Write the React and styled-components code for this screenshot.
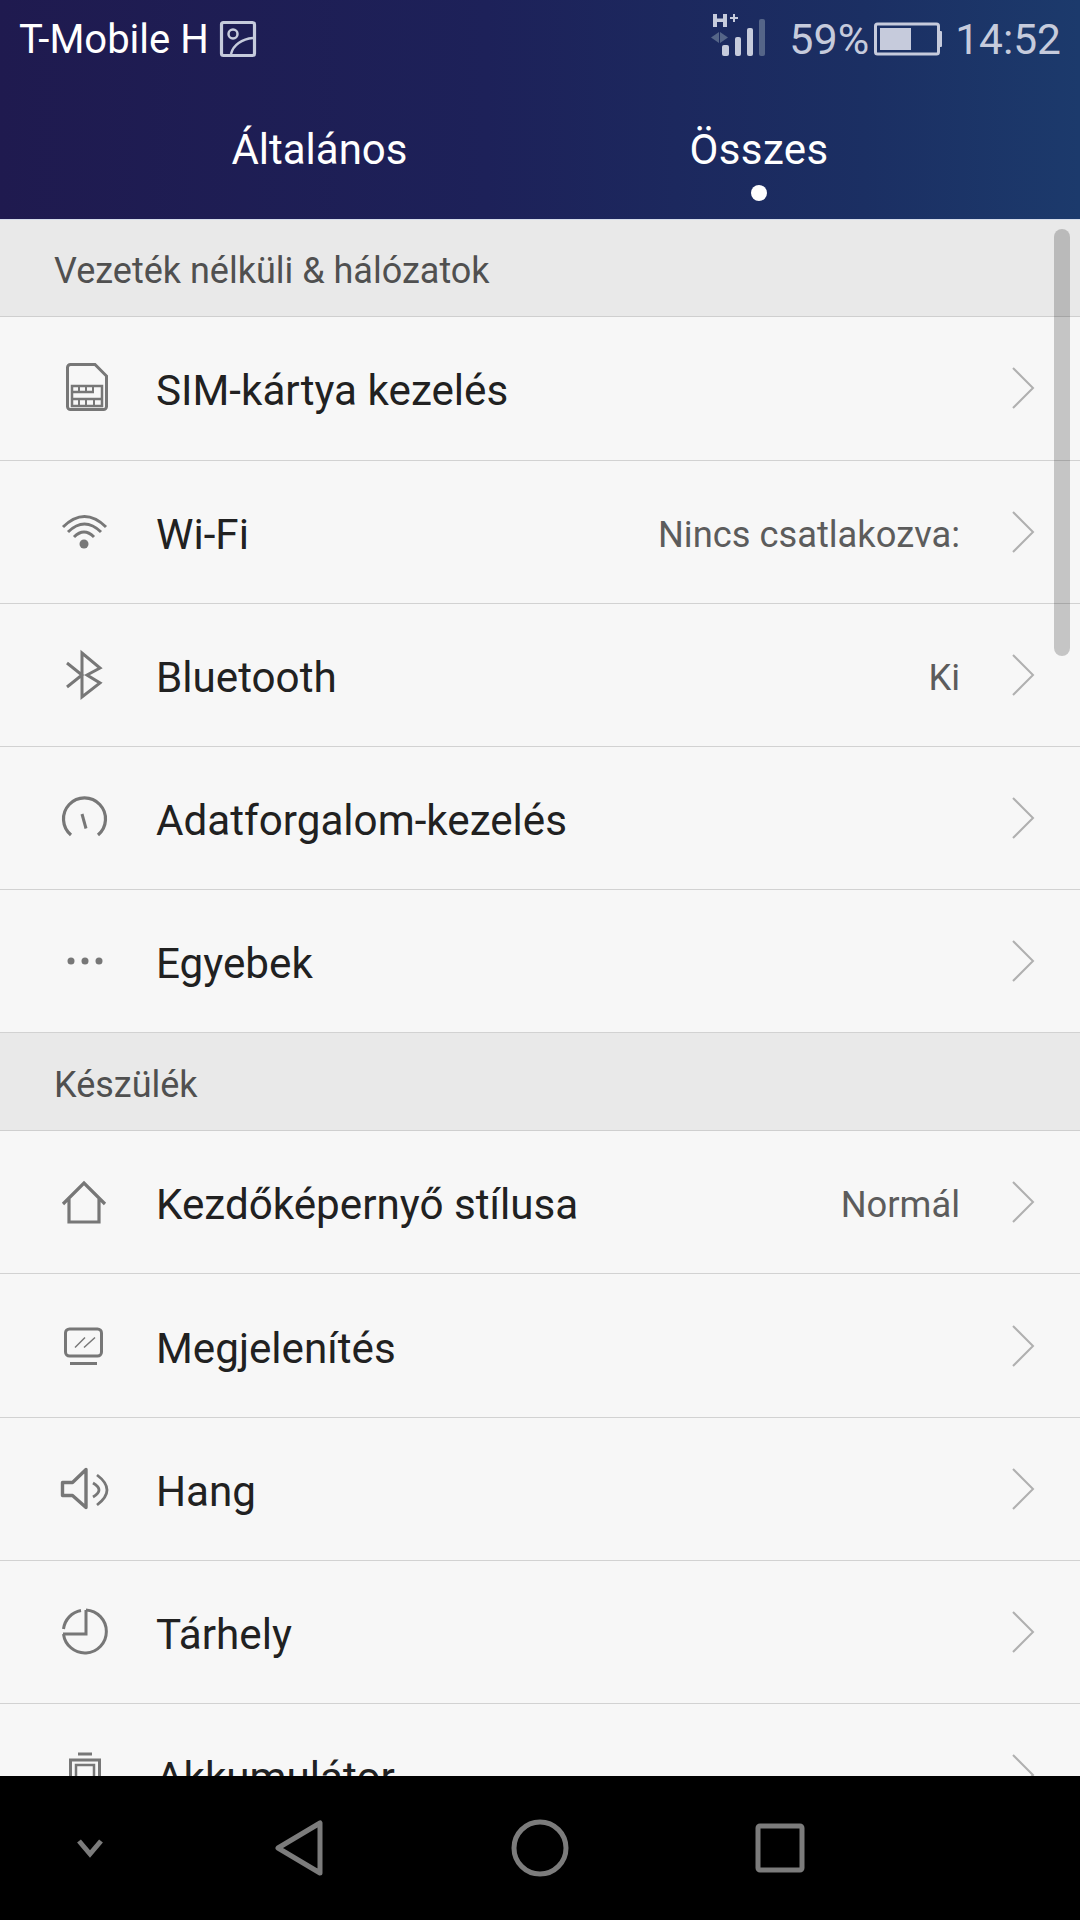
import React from 'react';
import styled, { createGlobalStyle } from 'styled-components';

const GlobalStyle = createGlobalStyle`
  html,
  body {
    margin: 0;
    padding: 0;
    background: #000;
  }
`;

const Screen = styled.div`
  position: relative;
  display: flex;
  flex-direction: column;
  width: 1080px;
  height: 1920px;
  overflow: hidden;
  font-family: Roboto, 'Noto Sans', sans-serif;
  background: #f7f7f7;
`;

const Header = styled.header`
  flex: none;
  height: 220px;
  box-sizing: border-box;
  background: linear-gradient(90deg, #1f1a4f 0%, #1d2159 45%, #1b2f63 80%, #1c3a6c 100%);
  border-bottom: 1px solid #d5dcea;
`;

const StatusBar = styled.div`
  display: flex;
  align-items: center;
  justify-content: space-between;
  height: 78px;
  padding: 0 19px;
`;

const StatusGroup = styled.div`
  display: flex;
  align-items: center;
  gap: ${props => props.gap || '0'};
`;

const Carrier = styled.span`
  font-size: 40px;
  color: #fff;
`;

const StatusText = styled.span`
  margin-left: ${props => props.$left || '0'};
  font-size: ${props => props.$size || '43px'};
  color: #c6cbdc;
`;

const Tabs = styled.nav`
  display: flex;
  justify-content: center;
  gap: 282px;
  padding-right: 20px;
`;

const Tab = styled.div`
  position: relative;
  margin-top: 47px;
  font-size: 42px;
  line-height: 50px;
  letter-spacing: ${props => props.$spacing || '0'};
  color: #fff;
`;

const TabDot = styled.span`
  position: absolute;
  left: 50%;
  bottom: -26px;
  width: 16px;
  height: 16px;
  margin-left: -8px;
  border-radius: 50%;
  background: #fff;
`;

const List = styled.main`
  position: relative;
  flex: 1;
  overflow: hidden;
`;

const SectionTitle = styled.div`
  display: flex;
  align-items: center;
  height: ${props => props.$height};
  box-sizing: border-box;
  padding: 6px 0 0 54px;
  font-size: 36px;
  color: #505050;
  background: #e9e9e9;
  border-bottom: 1px solid #cfcfcf;
`;

const Row = styled.div`
  display: flex;
  align-items: center;
  height: 143.2px;
  box-sizing: border-box;
  padding: 0 45px 0 61px;
  background: #f7f7f7;
  border-bottom: 1px solid #d2d2d2;
`;

const IconSlot = styled.span`
  display: flex;
  flex: none;
  width: 48px;
  height: 48px;
  margin-right: 47px;
  color: #777;
`;

const RowLabel = styled.span`
  flex: 1;
  padding-top: 5px;
  font-size: 42.2px;
  color: #212121;
`;

const RowValue = styled.span`
  margin-right: 51px;
  padding-top: 5px;
  font-size: 36.3px;
  color: #5c5c5c;
`;

const Scrollbar = styled.div`
  position: absolute;
  top: 9px;
  right: 10px;
  width: 16px;
  height: 427px;
  border-radius: 8px;
  background: rgba(0, 0, 0, 0.2);
`;

const NavBar = styled.footer`
  flex: none;
  display: grid;
  grid-template-columns: 180px 240px 240px 240px;
  align-items: center;
  height: 144px;
  background: #000;
`;

const NavSlot = styled.span`
  display: flex;
  justify-content: center;
  color: #7c7c7c;
`;

const Svg = ({ size = 48, w, h, children, ...rest }) => (
  <svg
    width={w || size}
    height={h || size}
    viewBox={`0 0 ${w || size} ${h || size}`}
    fill="none"
    stroke="currentColor"
    strokeWidth="3"
    overflow="visible"
    {...rest}
  >
    {children}
  </svg>
);

const ChevronSvg = styled(Svg)`
  flex: none;
  color: #b0b0b0;
`;

const PictureSvg = styled(Svg)`
  margin-left: 11px;
  color: #c6cbdc;
`;

const Chevron = () => (
  <ChevronSvg w={24} h={44} strokeWidth="2">
    <path d="M2 2l20 20L2 42" />
  </ChevronSvg>
);

const SimIcon = () => (
  <Svg>
    <path d="M9.5 0.5H34L45.5 12v30.5a3 3 0 0 1-3 3h-33a3 3 0 0 1-3-3v-39a3 3 0 0 1 3-3z" />
    <rect x="11" y="22" width="30" height="20" strokeWidth="2.5" />
    <path d="M11 28h22M11 35h30" strokeWidth="2.5" />
    <path d="M18 22v6M25 22v6M32 22v6M18 35v7M25 35v7M33 35v7" strokeWidth="2" />
  </Svg>
);

const WifiIcon = () => (
  <Svg>
    <path d="M2 19Q23.5-2 45 19M7 24Q23.5 8 40 24M13 29Q23 19 33 29" />
    <circle cx="23" cy="36" r="4.5" fill="currentColor" stroke="none" />
  </Svg>
);

const BluetoothIcon = () => (
  <Svg>
    <path d="M6 12l15 12L6 36M21 46V2l18 15-13 7 13 8z" />
  </Svg>
);

const GaugeIcon = () => (
  <Svg>
    <path d="M10 41A21 21 0 1 1 37 41" strokeWidth="3.2" />
    <path d="M21 20l4 14.5" />
  </Svg>
);

const DotsIcon = () => (
  <Svg>
    <circle cx="10" cy="24" r="3.5" fill="currentColor" stroke="none" />
    <circle cx="24" cy="24" r="3.5" fill="currentColor" stroke="none" />
    <circle cx="38" cy="24" r="3.5" fill="currentColor" stroke="none" />
  </Svg>
);

const HomeIcon = () => (
  <Svg strokeWidth="3.2">
    <path d="M2 26L23 5l21 21M8 20v24h30V20" />
  </Svg>
);

const DisplayIcon = () => (
  <Svg>
    <rect x="4.5" y="7" width="36" height="27" rx="4" />
    <path d="M14 25.5l10-10M23 25.5l11-10" strokeWidth="1.5" />
    <path d="M9 41.5h27" />
  </Svg>
);

const SoundIcon = () => (
  <Svg strokeWidth="3.4" strokeLinejoin="round">
    <path d="M1.5 17.5h10L25 4.5v38L11.5 30.5h-10z" />
    <path d="M32 18Q44 25 32 32M36 10Q56 25 36 40" strokeWidth="2.8" />
  </Svg>
);

const StorageIcon = () => (
  <Svg>
    <path d="M20 2.5A21.5 21.5 0 0 0 2.5 21M25 2A21.5 21.5 0 1 1 2.5 26" />
    <path d="M25 2v24H2" />
  </Svg>
);

const BatteryListIcon = () => (
  <Svg>
    <path d="M17 3h14" />
    <rect x="9.5" y="9" width="29" height="38" />
    <rect x="15" y="14" width="18" height="30" strokeWidth="2.5" />
  </Svg>
);

const PictureIcon = () => (
  <PictureSvg size={36} strokeWidth="3.2">
    <rect x="1.5" y="1.5" width="33" height="33" rx="2" />
    <circle cx="13" cy="13" r="4.5" strokeWidth="2.5" />
    <path d="M11 33C13 24 22 18 33 17" strokeWidth="2.5" />
  </PictureSvg>
);

const SignalIcon = () => (
  <svg width="56" height="60" viewBox="0 0 56 60" fill="#c6cbdc">
    <rect x="11" y="36" width="7" height="11" rx="2" />
    <rect x="24" y="28" width="6" height="19" rx="2" />
    <rect x="36" y="19" width="6" height="28" rx="2" />
    <rect x="48" y="10" width="6" height="37" rx="2" fill="#556588" />
    <path d="M8 23l-8 5.5L8 34zM9 23l8 5.5L9 34z" fill="#556588" />
    <path d="M2 5h4v4.5h6V5h4v13h-4v-5H6v5H2z" />
    <path d="M19 8h3V5h2v3h3v2h-3v3h-2v-3h-3z" />
  </svg>
);

const BatteryIcon = () => (
  <svg width="68" height="34" viewBox="0 0 68 34">
    <rect x="1.5" y="2" width="63" height="30" rx="2" fill="none" stroke="#c6cbdc" strokeWidth="3" />
    <rect x="6" y="6" width="31" height="22" fill="#c6cbdc" />
    <rect x="65" y="9" width="3" height="16" rx="1" fill="#c6cbdc" />
  </svg>
);

const BackIcon = () => (
  <svg width="50" height="56" viewBox="0 0 50 56" fill="none" stroke="currentColor" strokeWidth="5" strokeLinejoin="round">
    <path d="M45 3v50L3 28z" />
  </svg>
);

const sections = [
  {
    title: 'Vezeték nélküli & hálózatok',
    height: '97.4px',
    rows: [
      { icon: <SimIcon />, label: 'SIM-kártya kezelés' },
      { icon: <WifiIcon />, label: 'Wi-Fi', value: 'Nincs csatlakozva:' },
      { icon: <BluetoothIcon />, label: 'Bluetooth', value: 'Ki' },
      { icon: <GaugeIcon />, label: 'Adatforgalom-kezelés' },
      { icon: <DotsIcon />, label: 'Egyebek' },
    ],
  },
  {
    title: 'Készülék',
    height: '97.9px',
    rows: [
      { icon: <HomeIcon />, label: 'Kezdőképernyő stílusa', value: 'Normál' },
      { icon: <DisplayIcon />, label: 'Megjelenítés' },
      { icon: <SoundIcon />, label: 'Hang' },
      { icon: <StorageIcon />, label: 'Tárhely' },
      { icon: <BatteryListIcon />, label: 'Akkumulátor' },
    ],
  },
];

export default function App() {
  return (
    <Screen>
      <GlobalStyle />
      <Header>
        <StatusBar>
          <StatusGroup>
            <Carrier>T-Mobile H</Carrier>
            <PictureIcon />
          </StatusGroup>
          <StatusGroup gap="5px">
            <SignalIcon />
            <StatusText $left="17px">59%</StatusText>
            <BatteryIcon />
            <StatusText $left="8px" $size="42.5px">
              14:52
            </StatusText>
          </StatusGroup>
        </StatusBar>
        <Tabs>
          <Tab>Általános</Tab>
          <Tab $spacing="0.4px">
            Összes
            <TabDot />
          </Tab>
        </Tabs>
      </Header>
      <List>
        {sections.map(section => (
          <section key={section.title}>
            <SectionTitle $height={section.height}>{section.title}</SectionTitle>
            {section.rows.map(row => (
              <Row key={row.label}>
                <IconSlot>{row.icon}</IconSlot>
                <RowLabel>{row.label}</RowLabel>
                {row.value && <RowValue>{row.value}</RowValue>}
                <Chevron />
              </Row>
            ))}
          </section>
        ))}
        <Scrollbar />
      </List>
      <NavBar>
        <NavSlot>
          <svg width="28" height="20" viewBox="0 0 28 20" fill="none" stroke="currentColor" strokeWidth="5">
            <path d="M3 3l11 13L25 3" />
          </svg>
        </NavSlot>
        <NavSlot>
          <BackIcon />
        </NavSlot>
        <NavSlot>
          <svg width="58" height="58" viewBox="0 0 58 58" fill="none" stroke="currentColor" strokeWidth="5">
            <circle cx="29" cy="29" r="26" />
          </svg>
        </NavSlot>
        <NavSlot>
          <svg width="50" height="50" viewBox="0 0 50 50" fill="none" stroke="currentColor" strokeWidth="5" strokeLinejoin="round">
            <rect x="3" y="3" width="44" height="44" rx="2" />
          </svg>
        </NavSlot>
      </NavBar>
    </Screen>
  );
}
